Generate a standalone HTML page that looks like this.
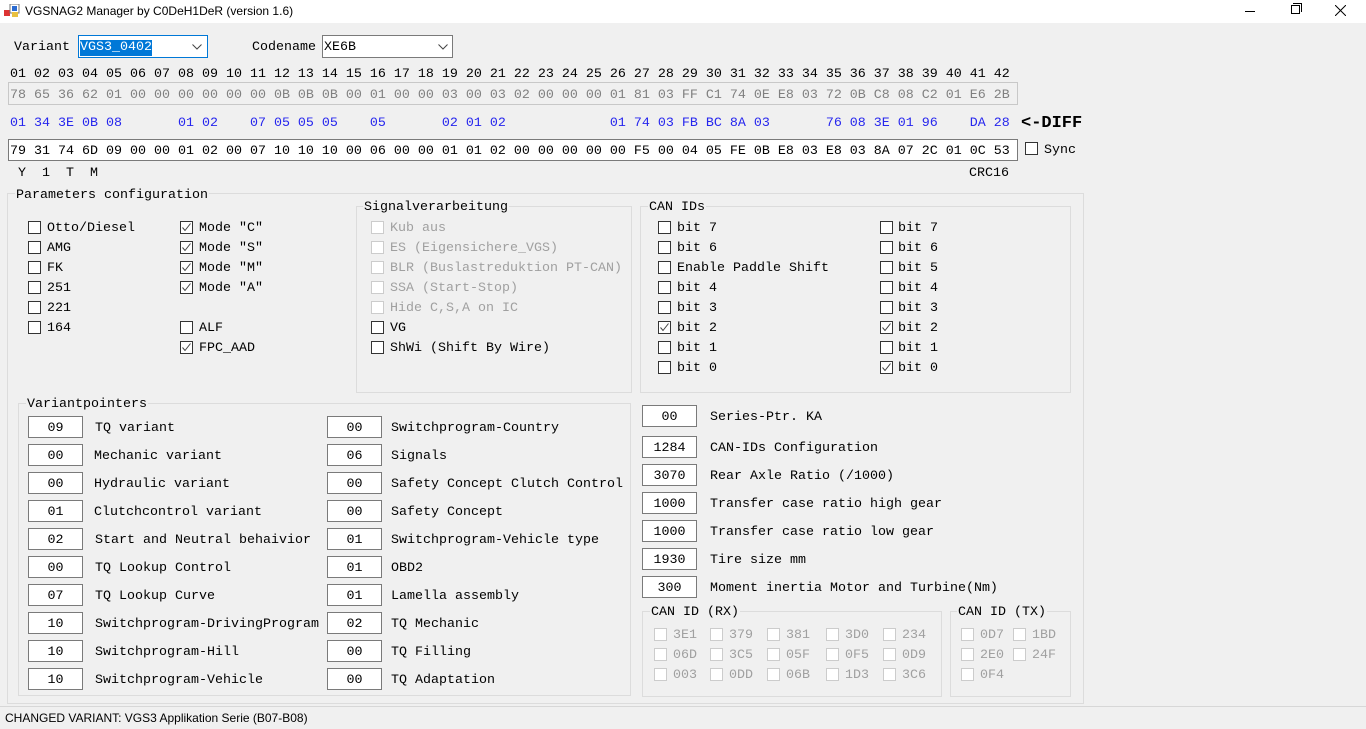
<!DOCTYPE html>
<html><head><meta charset="utf-8"><style>
*{margin:0;padding:0;box-sizing:border-box}
body{width:1366px;height:729px;background:#f0f0f0;position:relative;overflow:hidden;font-family:"Liberation Mono",monospace}
.t{position:absolute;font-size:13.33px;line-height:16px;white-space:pre;color:#000;margin-top:2px}
.s{position:absolute;font-family:"Liberation Sans",sans-serif;font-size:12px;white-space:pre}
.cb{position:absolute;width:13px;height:13px;border:1px solid #333;background:#fff}
.cb svg{position:absolute;left:0;top:0}
.d{border-color:#ccc}
.gr{color:#a0a0a0}
.g{position:absolute;border:1px solid #dcdcdc}
.gt{position:absolute;background:#f0f0f0;padding:0 1px}
.tb{position:absolute;width:55px;height:22px;border:1px solid #7a7a7a;background:#fff;text-align:center;line-height:23px;font-size:13.33px}
</style></head><body>
<div style="position:absolute;left:0;top:0;width:1366px;height:23px;background:#fff"></div>
<svg style="position:absolute;left:4px;top:4px" width="16" height="14"><rect x="0" y="6" width="6" height="6" fill="#d33"/><rect x="6" y="0" width="9" height="9" fill="#fff" stroke="#777"/><rect x="8" y="2" width="5" height="5" fill="#2a6ad0"/><rect x="8" y="8" width="6" height="5" fill="#e8c040"/></svg>
<div class="s" style="left:25px;top:4px">VGSNAG2 Manager by C0DeH1DeR (version 1.6)</div>
<div style="position:absolute;left:1245px;top:11px;width:10px;height:1px;background:#000"></div>
<div style="position:absolute;left:1291px;top:5px;width:9px;height:9px;border:1px solid #000;background:#fff"></div>
<div style="position:absolute;left:1293px;top:3px;width:9px;height:9px;border-top:1px solid #000;border-right:1px solid #000"></div>
<svg style="position:absolute;left:1335px;top:5px" width="11" height="11"><path d="M0 0L11 11M11 0L0 11" stroke="#000"/></svg>

<div class="t" style="left:14px;top:38px">Variant</div>
<div style="position:absolute;left:78px;top:35px;width:130px;height:23px;border:1px solid #0078d7;background:#fff"></div>
<div class="t" style="left:80px;top:38px;background:#0078d7;color:#fff">VGS3_0402</div>
<svg style="position:absolute;left:192px;top:44px" width="10" height="6"><path d="M0.5 0.5L5 5L9.5 0.5" stroke="#444" fill="none"/></svg>
<div class="t" style="left:252px;top:38px">Codename</div>
<div style="position:absolute;left:322px;top:35px;width:131px;height:23px;border:1px solid #7a7a7a;background:#fff"></div>
<div class="t" style="left:324px;top:38px">XE6B</div>
<svg style="position:absolute;left:438px;top:44px" width="10" height="6"><path d="M0.5 0.5L5 5L9.5 0.5" stroke="#444" fill="none"/></svg>

<div class="t" style="left:10px;top:65px">01 02 03 04 05 06 07 08 09 10 11 12 13 14 15 16 17 18 19 20 21 22 23 24 25 26 27 28 29 30 31 32 33 34 35 36 37 38 39 40 41 42</div>
<div style="position:absolute;left:8px;top:82px;width:1010px;height:23px;border:1px solid #c8c8c8"></div>
<div class="t" style="left:10px;top:86px;color:#808080">78 65 36 62 01 00 00 00 00 00 00 0B 0B 0B 00 01 00 00 03 00 03 02 00 00 00 01 81 03 FF C1 74 0E E8 03 72 0B C8 08 C2 01 E6 2B</div>
<div class="t" style="left:10px;top:114px;color:#2626ee">01 34 3E 0B 08       01 02    07 05 05 05    05       02 01 02             01 74 03 FB BC 8A 03       76 08 3E 01 96    DA 28</div>
<div class="t" style="left:1021px;top:113px;font-size:17px;font-weight:bold;line-height:18px">&lt;-DIFF</div>
<div style="position:absolute;left:8px;top:139px;width:1010px;height:22px;border:1px solid #7a7a7a;background:#fff"></div>
<div class="t" style="left:10px;top:142px">79 31 74 6D 09 00 00 01 02 00 07 10 10 10 00 06 00 00 01 01 02 00 00 00 00 00 F5 00 04 05 FE 0B E8 03 E8 03 8A 07 2C 01 0C 53</div>
<div class="cb" style="left:1025px;top:142px"></div>
<div class="t" style="left:1044px;top:141px">Sync</div>
<div class="t" style="left:18px;top:164px">Y  1  T  M</div>
<div class="t" style="left:969px;top:164px">CRC16</div>

<div class="g" style="left:7px;top:193px;width:1077px;height:511px"></div>
<div class="t gt" style="left:15px;top:186px">Parameters configuration</div>

<div class="cb" style="left:28px;top:221px"></div><div class="t" style="left:47px;top:219px">Otto/Diesel</div>
<div class="cb" style="left:28px;top:241px"></div><div class="t" style="left:47px;top:239px">AMG</div>
<div class="cb" style="left:28px;top:261px"></div><div class="t" style="left:47px;top:259px">FK</div>
<div class="cb" style="left:28px;top:281px"></div><div class="t" style="left:47px;top:279px">251</div>
<div class="cb" style="left:28px;top:301px"></div><div class="t" style="left:47px;top:299px">221</div>
<div class="cb" style="left:28px;top:321px"></div><div class="t" style="left:47px;top:319px">164</div>

<div class="cb" style="left:180px;top:221px"><svg width="11" height="11"><path d="M1.5 5.5L4 8.5L9.5 1.5" stroke="#444" fill="none"/></svg></div><div class="t" style="left:199px;top:219px">Mode "C"</div>
<div class="cb" style="left:180px;top:241px"><svg width="11" height="11"><path d="M1.5 5.5L4 8.5L9.5 1.5" stroke="#444" fill="none"/></svg></div><div class="t" style="left:199px;top:239px">Mode "S"</div>
<div class="cb" style="left:180px;top:261px"><svg width="11" height="11"><path d="M1.5 5.5L4 8.5L9.5 1.5" stroke="#444" fill="none"/></svg></div><div class="t" style="left:199px;top:259px">Mode "M"</div>
<div class="cb" style="left:180px;top:281px"><svg width="11" height="11"><path d="M1.5 5.5L4 8.5L9.5 1.5" stroke="#444" fill="none"/></svg></div><div class="t" style="left:199px;top:279px">Mode "A"</div>
<div class="cb" style="left:180px;top:321px"></div><div class="t" style="left:199px;top:319px">ALF</div>
<div class="cb" style="left:180px;top:341px"><svg width="11" height="11"><path d="M1.5 5.5L4 8.5L9.5 1.5" stroke="#444" fill="none"/></svg></div><div class="t" style="left:199px;top:339px">FPC_AAD</div>

<div class="g" style="left:356px;top:206px;width:276px;height:187px"></div>
<div class="t gt" style="left:363px;top:198px">Signalverarbeitung</div>
<div class="cb d" style="left:371px;top:221px"></div><div class="t gr" style="left:390px;top:219px">Kub aus</div>
<div class="cb d" style="left:371px;top:241px"></div><div class="t gr" style="left:390px;top:239px">ES (Eigensichere_VGS)</div>
<div class="cb d" style="left:371px;top:261px"></div><div class="t gr" style="left:390px;top:259px">BLR (Buslastreduktion PT-CAN)</div>
<div class="cb d" style="left:371px;top:281px"></div><div class="t gr" style="left:390px;top:279px">SSA (Start-Stop)</div>
<div class="cb d" style="left:371px;top:301px"></div><div class="t gr" style="left:390px;top:299px">Hide C,S,A on IC</div>
<div class="cb" style="left:371px;top:321px"></div><div class="t" style="left:390px;top:319px">VG</div>
<div class="cb" style="left:371px;top:341px"></div><div class="t" style="left:390px;top:339px">ShWi (Shift By Wire)</div>

<div class="g" style="left:640px;top:206px;width:431px;height:187px"></div>
<div class="t gt" style="left:648px;top:198px">CAN IDs</div>
<div class="cb" style="left:658px;top:221px"></div><div class="t" style="left:677px;top:219px">bit 7</div>
<div class="cb" style="left:658px;top:241px"></div><div class="t" style="left:677px;top:239px">bit 6</div>
<div class="cb" style="left:658px;top:261px"></div><div class="t" style="left:677px;top:259px">Enable Paddle Shift</div>
<div class="cb" style="left:658px;top:281px"></div><div class="t" style="left:677px;top:279px">bit 4</div>
<div class="cb" style="left:658px;top:301px"></div><div class="t" style="left:677px;top:299px">bit 3</div>
<div class="cb" style="left:658px;top:321px"><svg width="11" height="11"><path d="M1.5 5.5L4 8.5L9.5 1.5" stroke="#444" fill="none"/></svg></div><div class="t" style="left:677px;top:319px">bit 2</div>
<div class="cb" style="left:658px;top:341px"></div><div class="t" style="left:677px;top:339px">bit 1</div>
<div class="cb" style="left:658px;top:361px"></div><div class="t" style="left:677px;top:359px">bit 0</div>
<div class="cb" style="left:880px;top:221px"></div><div class="t" style="left:898px;top:219px">bit 7</div>
<div class="cb" style="left:880px;top:241px"></div><div class="t" style="left:898px;top:239px">bit 6</div>
<div class="cb" style="left:880px;top:261px"></div><div class="t" style="left:898px;top:259px">bit 5</div>
<div class="cb" style="left:880px;top:281px"></div><div class="t" style="left:898px;top:279px">bit 4</div>
<div class="cb" style="left:880px;top:301px"></div><div class="t" style="left:898px;top:299px">bit 3</div>
<div class="cb" style="left:880px;top:321px"><svg width="11" height="11"><path d="M1.5 5.5L4 8.5L9.5 1.5" stroke="#444" fill="none"/></svg></div><div class="t" style="left:898px;top:319px">bit 2</div>
<div class="cb" style="left:880px;top:341px"></div><div class="t" style="left:898px;top:339px">bit 1</div>
<div class="cb" style="left:880px;top:361px"><svg width="11" height="11"><path d="M1.5 5.5L4 8.5L9.5 1.5" stroke="#444" fill="none"/></svg></div><div class="t" style="left:898px;top:359px">bit 0</div>

<div class="g" style="left:18px;top:403px;width:613px;height:293px"></div>
<div class="t gt" style="left:26px;top:395px">Variantpointers</div>
<div class="tb" style="left:28px;top:416px">09</div><div class="t" style="left:95px;top:419px">TQ variant</div>
<div class="tb" style="left:28px;top:444px">00</div><div class="t" style="left:94px;top:447px">Mechanic variant</div>
<div class="tb" style="left:28px;top:472px">00</div><div class="t" style="left:94px;top:475px">Hydraulic variant</div>
<div class="tb" style="left:28px;top:500px">01</div><div class="t" style="left:94px;top:503px">Clutchcontrol variant</div>
<div class="tb" style="left:28px;top:528px">02</div><div class="t" style="left:95px;top:531px">Start and Neutral behaivior</div>
<div class="tb" style="left:28px;top:556px">00</div><div class="t" style="left:95px;top:559px">TQ Lookup Control</div>
<div class="tb" style="left:28px;top:584px">07</div><div class="t" style="left:95px;top:587px">TQ Lookup Curve</div>
<div class="tb" style="left:28px;top:612px">10</div><div class="t" style="left:95px;top:615px">Switchprogram-DrivingProgram</div>
<div class="tb" style="left:28px;top:640px">10</div><div class="t" style="left:95px;top:643px">Switchprogram-Hill</div>
<div class="tb" style="left:28px;top:668px">10</div><div class="t" style="left:95px;top:671px">Switchprogram-Vehicle</div>

<div class="tb" style="left:327px;top:416px">00</div><div class="t" style="left:391px;top:419px">Switchprogram-Country</div>
<div class="tb" style="left:327px;top:444px">06</div><div class="t" style="left:391px;top:447px">Signals</div>
<div class="tb" style="left:327px;top:472px">00</div><div class="t" style="left:391px;top:475px">Safety Concept Clutch Control</div>
<div class="tb" style="left:327px;top:500px">00</div><div class="t" style="left:391px;top:503px">Safety Concept</div>
<div class="tb" style="left:327px;top:528px">01</div><div class="t" style="left:391px;top:531px">Switchprogram-Vehicle type</div>
<div class="tb" style="left:327px;top:556px">01</div><div class="t" style="left:391px;top:559px">OBD2</div>
<div class="tb" style="left:327px;top:584px">01</div><div class="t" style="left:391px;top:587px">Lamella assembly</div>
<div class="tb" style="left:327px;top:612px">02</div><div class="t" style="left:391px;top:615px">TQ Mechanic</div>
<div class="tb" style="left:327px;top:640px">00</div><div class="t" style="left:391px;top:643px">TQ Filling</div>
<div class="tb" style="left:327px;top:668px">00</div><div class="t" style="left:391px;top:671px">TQ Adaptation</div>

<div class="tb" style="left:642px;top:405px">00</div><div class="t" style="left:710px;top:408px">Series-Ptr. KA</div>
<div class="tb" style="left:642px;top:436px">1284</div><div class="t" style="left:710px;top:439px">CAN-IDs Configuration</div>
<div class="tb" style="left:642px;top:464px">3070</div><div class="t" style="left:710px;top:467px">Rear Axle Ratio (/1000)</div>
<div class="tb" style="left:642px;top:492px">1000</div><div class="t" style="left:710px;top:495px">Transfer case ratio high gear</div>
<div class="tb" style="left:642px;top:520px">1000</div><div class="t" style="left:710px;top:523px">Transfer case ratio low gear</div>
<div class="tb" style="left:642px;top:548px">1930</div><div class="t" style="left:710px;top:551px">Tire size mm</div>
<div class="tb" style="left:642px;top:576px">300</div><div class="t" style="left:710px;top:579px">Moment inertia Motor and Turbine(Nm)</div>

<div class="g" style="left:642px;top:611px;width:300px;height:86px"></div>
<div class="t gt" style="left:650px;top:603px">CAN ID (RX)</div>
<div class="cb d" style="left:654px;top:628px"></div><div class="t gr" style="left:673px;top:626px">3E1</div>
<div class="cb d" style="left:710px;top:628px"></div><div class="t gr" style="left:729px;top:626px">379</div>
<div class="cb d" style="left:767px;top:628px"></div><div class="t gr" style="left:786px;top:626px">381</div>
<div class="cb d" style="left:826px;top:628px"></div><div class="t gr" style="left:845px;top:626px">3D0</div>
<div class="cb d" style="left:883px;top:628px"></div><div class="t gr" style="left:902px;top:626px">234</div>
<div class="cb d" style="left:654px;top:648px"></div><div class="t gr" style="left:673px;top:646px">06D</div>
<div class="cb d" style="left:710px;top:648px"></div><div class="t gr" style="left:729px;top:646px">3C5</div>
<div class="cb d" style="left:767px;top:648px"></div><div class="t gr" style="left:786px;top:646px">05F</div>
<div class="cb d" style="left:826px;top:648px"></div><div class="t gr" style="left:845px;top:646px">0F5</div>
<div class="cb d" style="left:883px;top:648px"></div><div class="t gr" style="left:902px;top:646px">0D9</div>
<div class="cb d" style="left:654px;top:668px"></div><div class="t gr" style="left:673px;top:666px">003</div>
<div class="cb d" style="left:710px;top:668px"></div><div class="t gr" style="left:729px;top:666px">0DD</div>
<div class="cb d" style="left:767px;top:668px"></div><div class="t gr" style="left:786px;top:666px">06B</div>
<div class="cb d" style="left:826px;top:668px"></div><div class="t gr" style="left:845px;top:666px">1D3</div>
<div class="cb d" style="left:883px;top:668px"></div><div class="t gr" style="left:902px;top:666px">3C6</div>

<div class="g" style="left:950px;top:611px;width:121px;height:86px"></div>
<div class="t gt" style="left:957px;top:603px">CAN ID (TX)</div>
<div class="cb d" style="left:961px;top:628px"></div><div class="t gr" style="left:980px;top:626px">0D7</div>
<div class="cb d" style="left:1013px;top:628px"></div><div class="t gr" style="left:1032px;top:626px">1BD</div>
<div class="cb d" style="left:961px;top:648px"></div><div class="t gr" style="left:980px;top:646px">2E0</div>
<div class="cb d" style="left:1013px;top:648px"></div><div class="t gr" style="left:1032px;top:646px">24F</div>
<div class="cb d" style="left:961px;top:668px"></div><div class="t gr" style="left:980px;top:666px">0F4</div>

<div style="position:absolute;left:0;top:706px;width:1366px;height:1px;background:#d7d7d7"></div>
<div class="s" style="left:5px;top:711px">CHANGED VARIANT: VGS3 Applikation Serie (B07-B08)</div>
</body></html>
